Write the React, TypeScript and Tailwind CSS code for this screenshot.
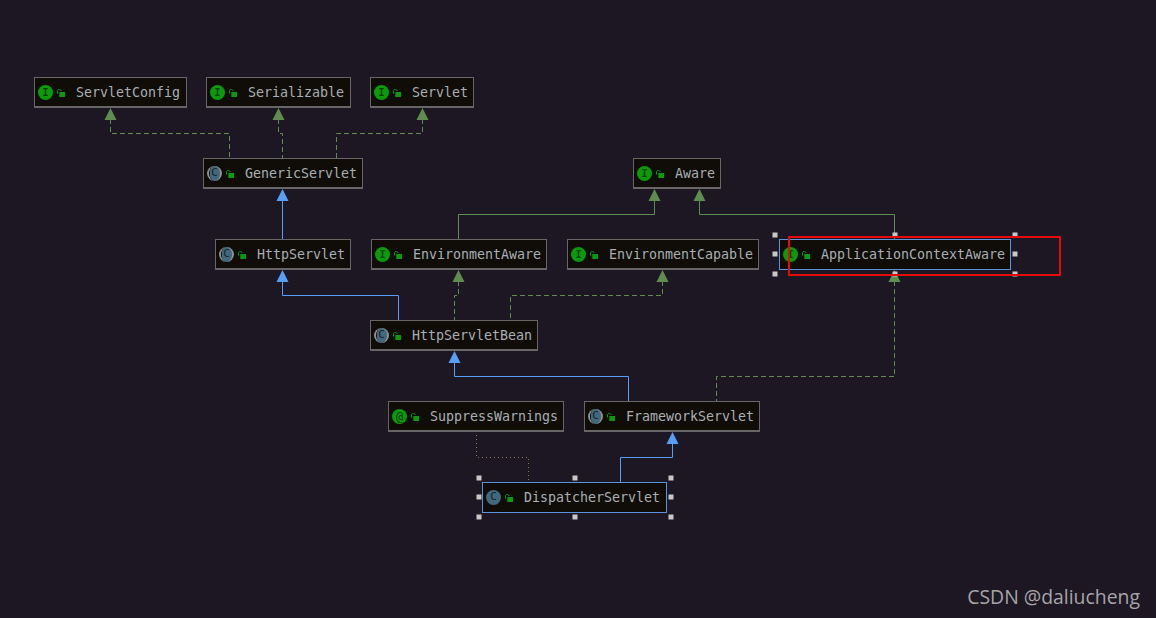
type Kind = 'interface' | 'abstract' | 'class' | 'annotation';

type Node = {
  label: string;
  x: number;
  y: number;
  w: number;
  kind: Kind;
  selected?: boolean;
};

const NODES: Node[] = [
  { label: 'ServletConfig', x: 34, y: 77, w: 153, kind: 'interface' },
  { label: 'Serializable', x: 206, y: 77, w: 145, kind: 'interface' },
  { label: 'Servlet', x: 370, y: 77, w: 104, kind: 'interface' },
  { label: 'GenericServlet', x: 203, y: 158, w: 160, kind: 'abstract' },
  { label: 'Aware', x: 633, y: 158, w: 88, kind: 'interface' },
  { label: 'HttpServlet', x: 215, y: 239, w: 136, kind: 'abstract' },
  { label: 'EnvironmentAware', x: 371, y: 239, w: 176, kind: 'interface' },
  { label: 'EnvironmentCapable', x: 567, y: 239, w: 192, kind: 'interface' },
  { label: 'ApplicationContextAware', x: 779, y: 239, w: 232, kind: 'interface', selected: true },
  { label: 'HttpServletBean', x: 370, y: 320, w: 168, kind: 'abstract' },
  { label: 'SuppressWarnings', x: 388, y: 401, w: 176, kind: 'annotation' },
  { label: 'FrameworkServlet', x: 584, y: 401, w: 176, kind: 'abstract' },
  { label: 'DispatcherServlet', x: 482, y: 482, w: 185, kind: 'class', selected: true },
];

const GREEN = '#5f8c4f';
const BLUE = '#589df6';

type Edge = { d: string; color: string; dash?: string; tip?: [number, number] };

const EDGES: Edge[] = [
  { d: 'M110.5 119V133.5H229.5V158', color: GREEN, dash: '5 3', tip: [110.5, 108] },
  { d: 'M278.5 119V133.5H282.5V158', color: GREEN, dash: '5 3', tip: [278.5, 108] },
  { d: 'M422.5 119V133.5H336.5V158', color: GREEN, dash: '5 3', tip: [422.5, 108] },
  { d: 'M282.5 200V239', color: BLUE, tip: [282.5, 189] },
  { d: 'M654.5 200V214.5H458.5V239', color: GREEN, tip: [654.5, 189] },
  { d: 'M699.5 200V214.5H894.5V239', color: GREEN, tip: [699.5, 189] },
  { d: 'M282.5 281V295.5H398.5V320', color: BLUE, tip: [282.5, 270] },
  { d: 'M458.5 281V295.5H454.5V320', color: GREEN, dash: '5 3', tip: [458.5, 270] },
  { d: 'M662.5 281V295.5H510.5V320', color: GREEN, dash: '5 3', tip: [662.5, 270] },
  { d: 'M894.5 281V376.5H716.5V401', color: GREEN, dash: '5 3', tip: [894.5, 270] },
  { d: 'M454.5 362V376.5H628.5V401', color: BLUE, tip: [454.5, 351] },
  { d: 'M672.5 443V457.5H620.5V482', color: BLUE, tip: [672.5, 432] },
  { d: 'M476.5 431V457.5H528.5V482', color: '#8a7a3c', dash: '1 3' },
];

const HANDLES: [number, number][] = [
  [775, 235], [895, 235], [1015, 235],
  [775, 254], [1015, 254],
  [775, 274], [895, 274], [1015, 274],
  [479, 478], [575, 478], [671, 478],
  [479, 497], [671, 497],
  [479, 517], [575, 517], [671, 517],
];

function KindIcon({ kind }: { kind: Kind }) {
  const letter = { interface: 'I', abstract: 'C', class: 'C', annotation: '@' }[kind];
  const isClass = kind === 'abstract' || kind === 'class';
  return (
    <span className="relative flex h-[15px] w-[15px] shrink-0 items-center justify-center">
      {kind === 'abstract' ? (
        <span className="absolute inset-0 rounded-full border-x-2 border-[#8f8f8f]" />
      ) : null}
      <span
        className={`flex h-[15px] items-center justify-center rounded-full font-['DejaVu_Sans_Mono',monospace] ${
          isClass ? 'bg-[#40697e] text-[11px] text-[#1a2228]' : 'bg-[#0a9a0a] text-[#0b3a0b]'
        } ${kind === 'abstract' ? 'w-[10px]' : 'w-[15px]'} ${kind === 'interface' ? 'text-[10px] font-bold' : ''} ${
          kind === 'annotation' ? 'text-[12px]' : ''
        }`}
      >
        {letter}
      </span>
    </span>
  );
}

function OpenLock() {
  return (
    <svg width="8" height="8" viewBox="0 0 8 8" className="block">
      <path d="M.5 4.5V2C.5 1 1.2.5 2.2.5S4 1 4 2" fill="none" stroke="#0a9a0a" strokeWidth="1" />
      <rect x="2.3" y="3" width="5.7" height="5" fill="#0a9a0a" />
    </svg>
  );
}

function DiagramNode({ node }: { node: Node }) {
  return (
    <div
      className={`absolute flex h-[31px] items-center border bg-[#100d08] pl-[3px] ${
        node.selected ? 'border-[#5b94dc]' : 'border-b-2 border-[#666666] pt-px'
      }`}
      style={{ left: node.x, top: node.y, width: node.w }}
    >
      <KindIcon kind={node.kind} />
      <span className="ml-1 shrink-0">
        <OpenLock />
      </span>
      <span className="ml-[11px] whitespace-nowrap font-['DejaVu_Sans_Mono',monospace] text-[13.29px] text-[#a8aeb4]">
        {node.label}
      </span>
    </div>
  );
}

export default function App() {
  return (
    <div className="relative h-[618px] w-[1156px] overflow-hidden bg-[#1d1723]">
      <svg width="1156" height="618" className="absolute inset-0">
        {EDGES.map((edge) => (
          <g key={edge.d}>
            <path d={edge.d} fill="none" stroke={edge.color} strokeWidth="1" strokeDasharray={edge.dash} />
            {edge.tip ? (
              <polygon
                points={`${edge.tip[0]},${edge.tip[1]} ${edge.tip[0] + 6},${edge.tip[1] + 12} ${edge.tip[0] - 6},${edge.tip[1] + 12}`}
                fill={edge.color}
              />
            ) : null}
          </g>
        ))}
      </svg>

      {NODES.map((node) => (
        <DiagramNode key={node.label} node={node} />
      ))}

      {HANDLES.map(([x, y]) => (
        <div
          key={`${x}-${y}`}
          className="absolute h-[5px] w-[5px] -translate-x-1/2 -translate-y-1/2 bg-[#c8c8c8]"
          style={{ left: x, top: y }}
        />
      ))}

      <div className="absolute left-[788px] top-[236px] h-[40px] w-[273px] border-2 border-[#e60b0b]" />

      <div className="absolute bottom-[7px] right-[16px] font-['Open_Sans',sans-serif] text-[19.4px] text-[#a5a5a5]">
        CSDN @daliucheng
      </div>
    </div>
  );
}
